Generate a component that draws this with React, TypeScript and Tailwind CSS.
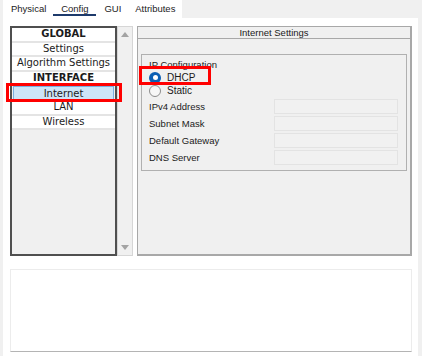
import React from "react";

const ITEMS = [
  { label: "GLOBAL", bold: true },
  { label: "Settings" },
  { label: "Algorithm Settings" },
  { label: "INTERFACE", bold: true },
  { label: "Internet", selected: true },
  { label: "LAN" },
  { label: "Wireless" },
];

const FIELDS = ["IPv4 Address", "Subnet Mask", "Default Gateway", "DNS Server"];

function Radio({ checked }: { checked?: boolean }) {
  return checked ? (
    <span className="flex h-[12px] w-[12px] items-center justify-center rounded-full bg-[#0a5fb4]">
      <span className="h-[5px] w-[5px] rounded-full bg-white" />
    </span>
  ) : (
    <span className="h-[12px] w-[12px] rounded-full border border-[#8c8c8c] bg-[#f7f7f7]" />
  );
}

export default function App() {
  return (
    <div className="relative h-[356px] w-[422px] overflow-hidden bg-[#f0f0f0] pl-[3px] pr-[4px] font-['Liberation_Sans',Arial,sans-serif] text-[9.5px] leading-none text-[#1b1b1b]">
      {/* Tabs */}
      <div className="flex h-[18px] w-[179px] items-start bg-white pt-[4px]">
        <span className="ml-[8px]">Physical</span>
        <span className="ml-[7px] flex h-[12px] w-[43px] justify-center border-b-2 border-[#1d3a6b]">Config</span>
        <span className="ml-[8px]">GUI</span>
        <span className="ml-[14px]">Attributes</span>
      </div>

      {/* Content */}
      <div className="h-[338px] bg-white pl-[7px] pr-[6px] pt-[8px]">
        <div className="flex h-[230px]">
          {/* List */}
          <div className="w-[107px] border-2 border-[#4f4f4f] bg-[#f0f0f0] font-['DejaVu_Sans',Verdana,sans-serif] text-[10px]">
            {ITEMS.map((it) => (
              <div
                key={it.label}
                className={
                  it.selected
                    ? "mx-[1px] flex h-[14.6px] items-center justify-center border border-[#7aaee0] bg-[#cde4f7]"
                    : "flex h-[14.6px] items-center justify-center border-b-2 border-[#e4e4e4] bg-white"
                }
              >
                <span className={it.bold ? "font-bold" : ""}>{it.label}</span>
              </div>
            ))}
          </div>

          {/* Scrollbar */}
          <div className="flex w-[16px] flex-col items-center justify-between border border-[#d6d6d6] bg-[#f0f0f0] py-[5px]">
            <svg width="8" height="5" viewBox="0 0 8 5">
              <path d="M0 5 L4 0 L8 5 Z" fill="#a3a3a3" />
            </svg>
            <svg width="8" height="5" viewBox="0 0 8 5">
              <path d="M0 0 L8 0 L4 5 Z" fill="#a3a3a3" />
            </svg>
          </div>

          {/* Settings panel */}
          <div className="ml-[4px] flex w-[275px] flex-col border border-r-2 border-b-2 border-[#a8a8a8] bg-[#f0f0f0]">
            <div className="flex h-[12px] shrink-0 items-center justify-center border-b border-[#a8a8a8]">
              Internet Settings
            </div>
            <div className="mx-[3px] mt-[15px] border border-[#b0b0b0] px-[7px] pb-[4px] pt-[4px]">
              <div className="h-[12px] pt-[1px]">IP Configuration</div>
              <div className="flex h-[13.5px] items-center gap-[6px] text-[10px]">
                <Radio checked />
                <span>DHCP</span>
              </div>
              <div className="flex h-[13.5px] items-center gap-[6px] text-[10px]">
                <Radio />
                <span>Static</span>
              </div>
              {FIELDS.map((f) => (
                <div key={f} className="flex h-[17px] items-center justify-between">
                  <span>{f}</span>
                  <div className="mr-[1px] h-[15px] w-[124px] border border-[#e3e3e3] bg-[#f1f1f1]" />
                </div>
              ))}
            </div>
          </div>
        </div>

        {/* Bottom box */}
        <div className="mt-[13px] h-[83px] w-[402px] border border-[#ececec] border-b-[#b4b4b4] bg-white" />
      </div>

      {/* Highlights */}
      <div className="absolute left-[6px] top-[83px] h-[19px] w-[116px] border-[3px] border-[#ff0000]" />
      <div className="absolute left-[139px] top-[66px] h-[19px] w-[72px] border-[3px] border-[#ff0000]" />
    </div>
  );
}
